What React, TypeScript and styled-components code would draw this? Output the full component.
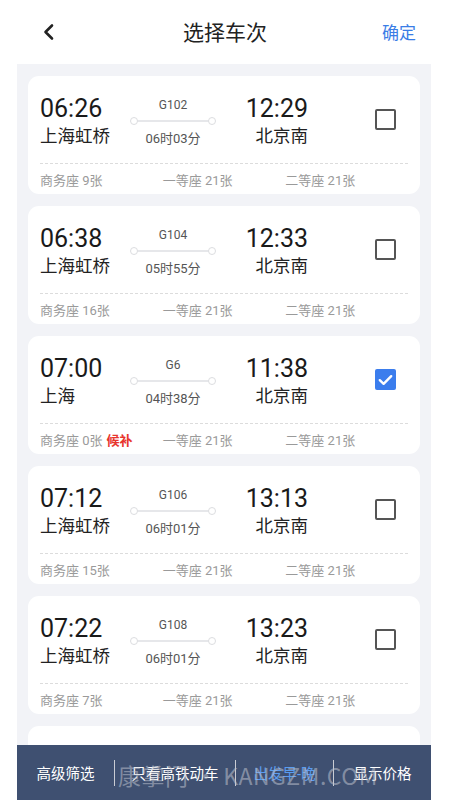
import React from "react";
import styled, { createGlobalStyle } from "styled-components";

const GlobalStyle = createGlobalStyle`
  html, body {
    margin: 0;
    padding: 0;
    background: #fff;
  }
  body {
    font-family: Roboto, "Noto Sans CJK SC", sans-serif;
    width: 450px;
    height: 800px;
    overflow: hidden;
  }
`;

const Page = styled.div`
  position: relative;
  width: 450px;
  height: 800px;
  overflow: hidden;
  background: #fff;
  display: flex;
  flex-direction: column;
`;

const Header = styled.div`
  height: 64px;
  flex-shrink: 0;
  display: grid;
  grid-template-columns: 100px 1fr 100px;
  align-items: center;
  padding: 0 34px 0 42px;
  box-sizing: border-box;
`;

const BackButton = styled.div`
  display: flex;
  align-items: center;
  height: 24px;
`;

const Title = styled.div`
  text-align: center;
  font-size: 21px;
  color: #222;
  margin-top: -2px;
  margin-left: -8px;
`;

const Confirm = styled.div`
  text-align: right;
  font-size: 17px;
  color: #3a7de6;
  margin-top: -2px;
`;

const ListPanel = styled.div`
  flex: 1;
  margin: 0 19px 0 17px;
  background: #f2f3f7;
  padding: 12px 11px;
  display: flex;
  flex-direction: column;
  gap: 12px;
`;

const Card = styled.div`
  flex-shrink: 0;
  height: 118px;
  background: #fff;
  border-radius: 11px;
  padding: 0 12px;
  box-sizing: border-box;
`;

const TopRow = styled.div`
  display: flex;
  align-items: flex-start;
  height: 88px;
  padding-top: 18px;
  box-sizing: border-box;
  border-bottom: 1px dashed #dcdcdc;
`;

const Endpoint = styled.div<{ $align: "left" | "right"; $width: number }>`
  width: ${(p) => p.$width}px;
  display: flex;
  flex-direction: column;
  align-items: ${(p) => (p.$align === "left" ? "flex-start" : "flex-end")};
`;

const Time = styled.div`
  font-size: 25px;
  line-height: 30px;
  color: #1a1a1a;
`;

const Station = styled.div`
  font-size: 17.5px;
  line-height: 25px;
  color: #222;
  white-space: nowrap;
`;

const Middle = styled.div`
  width: 86px;
  display: flex;
  flex-direction: column;
  align-items: center;
`;

const TrainNo = styled.div`
  font-size: 12px;
  line-height: 16px;
  color: #555;
  margin-top: 3px;
`;

const Track = styled.div`
  position: relative;
  width: 86px;
  height: 10px;
  margin-top: 3px;
  display: flex;
  align-items: center;
  justify-content: space-between;
  &::before {
    content: "";
    position: absolute;
    left: 4px;
    right: 4px;
    top: 4px;
    height: 2px;
    background: #e6e7ea;
  }
`;

const Dot = styled.span`
  position: relative;
  width: 6px;
  height: 6px;
  border: 1px solid #dcdde0;
  border-radius: 50%;
  background: #fff;
`;

const Duration = styled.div`
  font-size: 13px;
  line-height: 18px;
  color: #555;
  margin-top: 4px;
`;

const CheckSlot = styled.div`
  margin-left: 67px;
  margin-top: 15px;
  width: 21px;
  height: 21px;
`;

const Box = styled.div<{ $checked: boolean }>`
  width: 21px;
  height: 21px;
  box-sizing: border-box;
  border-radius: 2px;
  border: ${(p) => (p.$checked ? "none" : "2px solid #555")};
  background: ${(p) => (p.$checked ? "#3b7ded" : "transparent")};
  display: flex;
  align-items: center;
  justify-content: center;
`;

const SeatRow = styled.div`
  display: flex;
  padding-top: 8px;
`;

const Seat = styled.div`
  width: 123px;
  font-size: 13px;
  line-height: 18px;
  color: #9a9a9a;
  white-space: nowrap;
`;

const Waitlist = styled.span`
  color: #e8342c;
  font-weight: bold;
  margin-left: 4px;
`;

const BottomBar = styled.div`
  position: absolute;
  left: 17px;
  right: 19px;
  bottom: 0;
  height: 55px;
  background: #3f5071;
  display: flex;
  align-items: center;
`;

const BarItem = styled.div<{ $width: number; $active?: boolean; $divider?: boolean }>`
  width: ${(p) => p.$width}px;
  height: 26px;
  display: flex;
  align-items: center;
  justify-content: center;
  font-size: 14.5px;
  color: ${(p) => (p.$active ? "#5a9cf0" : "#fff")};
  border-left: ${(p) => (p.$divider ? "1px solid #c9ccd4" : "none")};
  box-sizing: border-box;
`;

const Watermark = styled.div`
  position: absolute;
  left: 118px;
  top: 760px;
  font-size: 23px;
  line-height: 30px;
  color: rgba(190, 194, 206, 0.55);
  font-family: "Noto Sans CJK SC", sans-serif;
  letter-spacing: 0.5px;
  pointer-events: none;
  white-space: nowrap;
`;

type Train = {
  dep: string;
  from: string;
  no: string;
  dur: string;
  arr: string;
  to: string;
  biz: string;
  first: string;
  second: string;
  checked?: boolean;
  waitlist?: boolean;
};

const trains: Train[] = [
  { dep: "06:26", from: "上海虹桥", no: "G102", dur: "06时03分", arr: "12:29", to: "北京南", biz: "9张", first: "21张", second: "21张" },
  { dep: "06:38", from: "上海虹桥", no: "G104", dur: "05时55分", arr: "12:33", to: "北京南", biz: "16张", first: "21张", second: "21张" },
  { dep: "07:00", from: "上海", no: "G6", dur: "04时38分", arr: "11:38", to: "北京南", biz: "0张", first: "21张", second: "21张", checked: true, waitlist: true },
  { dep: "07:12", from: "上海虹桥", no: "G106", dur: "06时01分", arr: "13:13", to: "北京南", biz: "15张", first: "21张", second: "21张" },
  { dep: "07:22", from: "上海虹桥", no: "G108", dur: "06时01分", arr: "13:23", to: "北京南", biz: "7张", first: "21张", second: "21张" },
  { dep: "07:34", from: "上海虹桥", no: "G110", dur: "06时01分", arr: "13:35", to: "北京南", biz: "8张", first: "21张", second: "21张" },
];

const TrainCard = ({ t }: { t: Train }) => (
  <Card>
    <TopRow>
      <Endpoint $align="left" $width={90}>
        <Time>{t.dep}</Time>
        <Station>{t.from}</Station>
      </Endpoint>
      <Middle>
        <TrainNo>{t.no}</TrainNo>
        <Track>
          <Dot />
          <Dot />
        </Track>
        <Duration>{t.dur}</Duration>
      </Middle>
      <Endpoint $align="right" $width={92}>
        <Time>{t.arr}</Time>
        <Station>{t.to}</Station>
      </Endpoint>
      <CheckSlot>
        <Box $checked={!!t.checked}>
          {t.checked && (
            <svg width="15" height="12" viewBox="0 0 15 12">
              <polyline
                points="1.8,6.2 5.6,9.8 13.2,2.2"
                fill="none"
                stroke="#fff"
                strokeWidth="2.4"
                strokeLinecap="round"
                strokeLinejoin="round"
              />
            </svg>
          )}
        </Box>
      </CheckSlot>
    </TopRow>
    <SeatRow>
      <Seat>
        商务座 {t.biz}
        {t.waitlist && <Waitlist>候补</Waitlist>}
      </Seat>
      <Seat>一等座 {t.first}</Seat>
      <Seat>二等座 {t.second}</Seat>
    </SeatRow>
  </Card>
);

export default function App() {
  return (
    <Page>
      <GlobalStyle />
      <Header>
        <BackButton>
          <svg width="14" height="18" viewBox="0 0 14 18">
            <polyline
              points="10,2.5 3.5,9 10,15.5"
              fill="none"
              stroke="#222"
              strokeWidth="2.6"
              strokeLinecap="round"
              strokeLinejoin="round"
            />
          </svg>
        </BackButton>
        <Title>选择车次</Title>
        <Confirm>确定</Confirm>
      </Header>
      <ListPanel>
        {trains.map((t) => (
          <TrainCard key={t.no} t={t} />
        ))}
      </ListPanel>
      <BottomBar>
        <BarItem $width={97}>高级筛选</BarItem>
        <BarItem $width={121} $divider>只看高铁动车</BarItem>
        <BarItem $width={98} $divider $active>出发早-晚</BarItem>
        <BarItem $width={98} $divider>显示价格</BarItem>
      </BottomBar>
      <Watermark>康掌门 • KANGZM.COM</Watermark>
    </Page>
  );
}
